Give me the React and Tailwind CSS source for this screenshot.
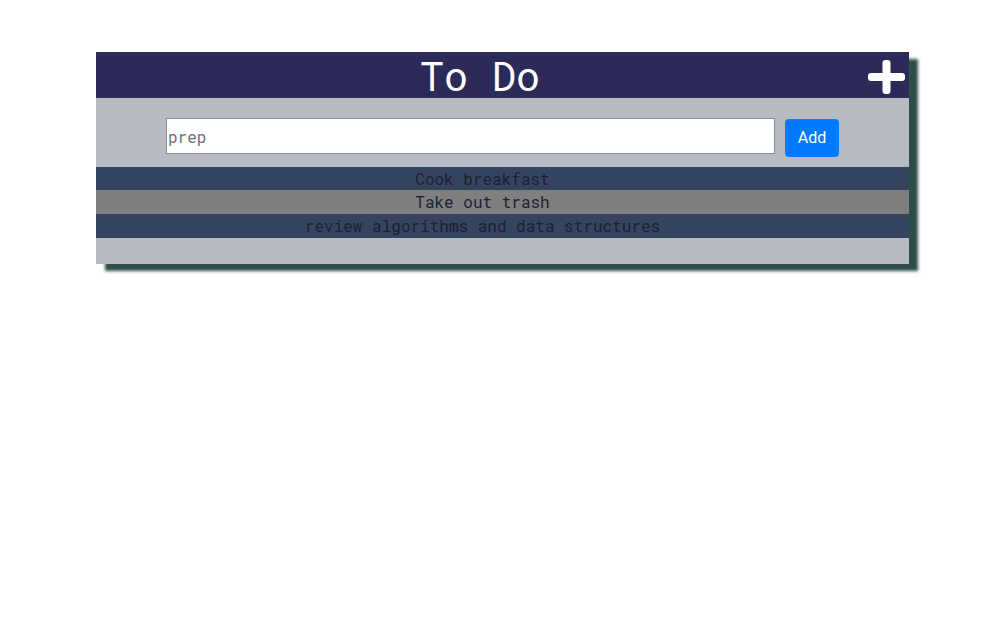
import React from "react";

const mono = { fontFamily: '"Roboto Mono", "DejaVu Sans Mono", monospace' };

export default function App() {
  const items = [
    { text: "Cook breakfast", bg: "bg-[#35445e]", h: "h-[23px] leading-[23px]" },
    { text: "Take out trash", bg: "bg-[#7f7f80]", h: "h-[24px] leading-[24px]" },
    { text: "review algorithms and data structures", bg: "bg-[#35445e]", h: "h-[24px] leading-[24px]" },
  ];
  return (
    <div className="w-[1000px] h-[622px] bg-white pt-[52px] pl-[96px]">
      <div className="w-[813px] bg-[#b6bac3] shadow-[9px_7px_3px_#2d4d4b] pb-[26px]">
        <div className="h-[46px] bg-[#2b2a59] flex items-center">
          <div className="flex-1 text-center text-white text-[40px] leading-[46px] pt-[2px] pr-[4px]" style={mono}>
            To Do
          </div>
          <svg width="37" height="34" viewBox="0 0 37 34" className="mr-[4px] mt-[4px]">
            <rect x="14.5" y="0" width="8" height="34" rx="3" fill="white" />
            <rect x="0" y="13" width="37" height="8" rx="3" fill="white" />
          </svg>
        </div>
        <div className="flex items-start pl-[70px] pt-[20px] pb-[10px] gap-[10px]">
          <input
            readOnly
            value="prep"
            className="w-[609px] h-[36px] bg-white border border-[#8c9099] px-[1px] text-[16px] text-[#6b7080] outline-none"
            style={mono}
          />
          <button
            className="w-[54px] h-[38px] mt-[1px] bg-[#007bff] text-white rounded-[4px] text-[16px]"
            style={{ fontFamily: 'Roboto, "Liberation Sans", sans-serif' }}
          >
            Add
          </button>
        </div>
        <div className="flex flex-col">
          {items.map((it, i) => (
            <div
              key={i}
              className={`${it.bg} ${it.h} text-center pr-[40px] text-[16px] text-[#1b2033]`}
              style={mono}
            >
              {it.text}
            </div>
          ))}
        </div>
      </div>
    </div>
  );
}
